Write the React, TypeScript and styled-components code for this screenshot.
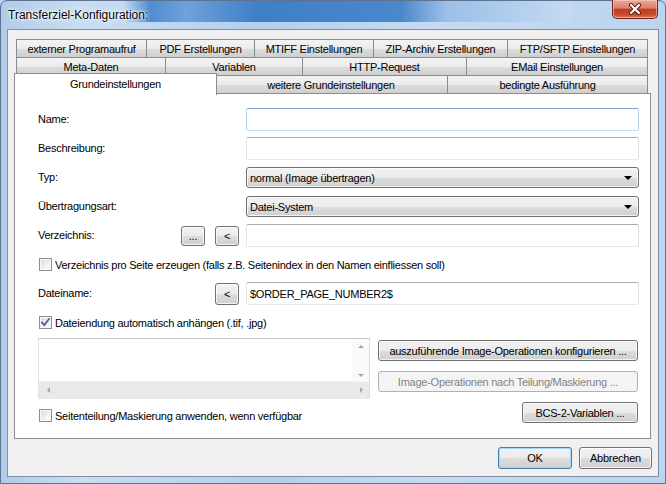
import React from 'react';
import styled, { createGlobalStyle, css } from 'styled-components';

const GlobalStyle = createGlobalStyle`
  html, body {
    margin: 0;
    padding: 0;
    width: 666px;
    height: 484px;
    overflow: hidden;
    background: #bcd4ee;
  }
  * { box-sizing: border-box; }
  body {
    font-family: "Liberation Sans", Arial, sans-serif;
    font-size: 11px;
    letter-spacing: -0.25px;
    color: #000;
  }
`;

// aero frame
const Window = styled.div`
  width: 666px;
  height: 484px;
  display: flex;
  flex-direction: column;
  padding: 0 6px 6px 6px;
  border: 1px solid #5d7390;
  border-radius: 7px 7px 0 0;
  background: linear-gradient(90deg, #b0cbe9 0%, #c9ddf2 12%, #b4cfec 40%, #c6dbf2 65%, #bcd4ee 100%);
`;

const TitleBar = styled.div`
  height: 28px;
  display: flex;
  align-items: flex-start;
`;

const Title = styled.div`
  position: relative;
  z-index: 1;
  flex: none;
  margin: 7px 0 0 1px;
  font-size: 12px;
  line-height: 15px;
  letter-spacing: 0;
  color: #000;
  text-shadow: 0 0 6px #fff, 0 0 3px #fff, 0 0 2px #fff;
`;

// blurred desktop showing through the glass
const Glass = styled.div`
  flex: 1;
  height: 21px;
  margin: 0 40px 0 -25px;
  background-color: #5b93d3;
  background-image: linear-gradient(90deg, #c6dbf1 0%, #4f8dd0 6%, #6ea2da 14%, #3f7fc6 30%, #4a88cc 62%, #9cc0e8 72%, #b2cfee 88%, #c6dbf1 100%);
`;

const CloseButton = styled.div`
  width: 46px;
  height: 19px;
  flex: none;
  margin: -1px 1px 0 0;
  display: flex;
  align-items: center;
  justify-content: center;
  border: 1px solid #6b2a21;
  border-top: none;
  border-radius: 0 0 5px 5px;
  background: linear-gradient(#e9a99a 0%, #dc7e68 45%, #c53d1f 52%, #c9472a 80%, #e27a55 100%);
  box-shadow: inset 0 0 0 1px rgba(255, 210, 200, 0.55);
`;

const Client = styled.div`
  flex: 1;
  display: flex;
  flex-direction: column;
  background: #f0f0f0;
  border: 1px solid #7f8fa4;
`;

const TabControl = styled.div`
  flex: 1;
  display: flex;
  flex-direction: column;
  margin: 9px 7px 0 6px;
`;

const TabRow = styled.div`
  display: flex;
  align-items: flex-start;
  padding: 0 3px 0 2px;
  & + & { margin-top: -1px; }
`;

const Tab = styled.div<{ $w: number; $active?: boolean }>`
  width: ${p => p.$w}px;
  height: 19px;
  flex: none;
  display: flex;
  align-items: center;
  justify-content: center;
  white-space: nowrap;
  border: 1px solid #898c95;
  background: linear-gradient(#f3f3f3 0%, #ebebeb 50%, #dddddd 51%, #cfcfcf 100%);
  & + & { margin-left: -1px; }
  ${p => p.$active && css`
    position: relative;
    z-index: 1;
    width: ${p.$w + 4}px;
    height: 22px;
    margin: -2px -2px -1px -2px;
    padding-bottom: 2px;
    border-bottom: none;
    background: #fff;
  `}
`;

const Panel = styled.div`
  flex: 1;
  margin-top: -1px;
  background: #fff;
  border: 1px solid #898c95;
  padding: 11px 11px 0 23px;
  display: flex;
  flex-direction: column;
`;

const FormRow = styled.div`
  height: 29px;
  display: flex;
  align-items: center;
`;

const Label = styled.div`
  flex: 1;
  white-space: nowrap;
  margin-top: -2px;
`;

const ButtonGroup = styled.div`
  display: flex;
  gap: 10px;
  margin-right: 7px;
`;

const TextBox = styled.div<{ $focus?: boolean }>`
  width: 393px;
  height: 23px;
  display: flex;
  align-items: center;
  padding-left: 3px;
  border: 1px solid;
  border-radius: 2px;
  border-color: ${p => (p.$focus ? '#7ea4cf #b7d2ec #c5dbf0 #b7d2ec' : '#abadb3 #dbdfe6 #e3e9ef #e2e3ea')};
  background: #fff;
  white-space: nowrap;
`;

const buttonFace = css`
  border: 1px solid #707070;
  border-radius: 3px;
  background: linear-gradient(#f2f2f2 0%, #ebebeb 50%, #dddddd 51%, #cfcfcf 100%);
  box-shadow: inset 0 0 0 1px rgba(255, 255, 255, 0.75);
`;

const Combo = styled.div`
  ${buttonFace};
  width: 393px;
  height: 21px;
  display: flex;
  align-items: center;
  justify-content: space-between;
  padding: 0 6px 0 3px;
`;

const Button = styled.div<{ $w?: number; $h?: number; $disabled?: boolean; $default?: boolean }>`
  ${buttonFace};
  width: ${p => (p.$w ? `${p.$w}px` : '100%')};
  height: ${p => p.$h ?? 21}px;
  flex: none;
  display: flex;
  align-items: center;
  justify-content: center;
  white-space: nowrap;
  ${p => p.$disabled && css`
    border-color: #adb2b5;
    background: #f4f4f4;
    color: #838383;
    box-shadow: none;
  `}
  ${p => p.$default && css`
    border-color: #3c7fb1;
    box-shadow: inset 0 0 0 1px #a8d8f3;
  `}
`;

const CheckRow = styled.div<{ $gapTop?: number }>`
  height: 29px;
  margin-top: ${p => p.$gapTop ?? 0}px;
  display: flex;
  align-items: center;
  gap: 3px;
  padding-left: 1px;
  white-space: nowrap;
`;

const CheckBox = styled.span`
  width: 13px;
  height: 13px;
  flex: none;
  display: flex;
  align-items: center;
  justify-content: center;
  border: 1px solid #8e8f8f;
  background: linear-gradient(135deg, #d6d6d6 0%, #f2f2f2 60%, #ffffff 100%);
  box-shadow: inset 0 0 0 1px #f6f6f6;
`;

const Section = styled.div`
  display: grid;
  grid-template-columns: 332px 260px;
  column-gap: 8px;
  margin-top: 1px;
`;

const LeftColumn = styled.div`
  display: flex;
  flex-direction: column;
`;

const RightColumn = styled.div`
  display: flex;
  flex-direction: column;
  align-items: flex-end;
  gap: 10px;
  padding-top: 2px;
`;

const ListBox = styled.div`
  height: 61px;
  display: grid;
  grid-template-columns: 1fr 17px;
  grid-template-rows: 1fr 17px;
  border: 1px solid;
  border-color: #c3c5ca #dbdfe6 #e3e9ef #e2e3ea;
  background: #fff;
`;

const VScroll = styled.div`
  display: flex;
  flex-direction: column;
  justify-content: space-between;
  align-items: center;
  padding: 6px 0 4px;
  background: #fafafa;
`;

const HScroll = styled.div`
  grid-column: 1 / 3;
  display: flex;
  justify-content: space-between;
  align-items: center;
  padding: 0 6px 0 8px;
  background: #e9e9e9;
  border-top: 1px solid #f4f4f4;
`;

const Arrow = styled.span<{ $dir: 'up' | 'down' | 'left' | 'right'; $color?: string; $size?: number }>`
  width: 0;
  height: 0;
  border: ${p => p.$size ?? 3}px solid transparent;
  ${p => {
    const c = p.$color ?? '#a6a6a6';
    const s = p.$size ?? 3;
    switch (p.$dir) {
      case 'up': return css`border-bottom-color: ${c}; border-top-width: 0; border-bottom-width: ${s}px;`;
      case 'down': return css`border-top-color: ${c}; border-bottom-width: 0; border-top-width: ${s}px;`;
      case 'left': return css`border-right-color: ${c}; border-left-width: 0;`;
      default: return css`border-left-color: ${c}; border-right-width: 0;`;
    }
  }}
`;

const Footer = styled.div`
  display: flex;
  justify-content: flex-end;
  gap: 7px;
  padding: 8px 6px 7px;
`;

const tabRows = [
  [
    { label: 'externer Programaufruf', w: 131 },
    { label: 'PDF Erstellungen', w: 109 },
    { label: 'MTIFF Einstellungen', w: 120 },
    { label: 'ZIP-Archiv Erstellungen', w: 135 },
    { label: 'FTP/SFTP Einstellungen', w: 141 },
  ],
  [
    { label: 'Meta-Daten', w: 150 },
    { label: 'Variablen', w: 138 },
    { label: 'HTTP-Request', w: 165 },
    { label: 'EMail Einstellungen', w: 182 },
  ],
  [
    { label: 'Grundeinstellungen', w: 199, active: true },
    { label: 'weitere Grundeinstellungen', w: 234 },
    { label: 'bedingte Ausführung', w: 201 },
  ],
];

const Check = ({ checked }: { checked?: boolean }) => (
  <CheckBox>
    {checked && (
      <svg width="11" height="11" viewBox="0 0 11 11">
        <path d="M2 5.5 L4.3 8 L9 2" fill="none" stroke="#4a6391" strokeWidth="1.8" strokeLinecap="square" />
      </svg>
    )}
  </CheckBox>
);

export default function App() {
  return (
    <>
      <GlobalStyle />
      <Window>
        <TitleBar>
          <Title>Transferziel-Konfiguration:</Title>
          <Glass />
          <CloseButton>
            <svg width="14" height="12" viewBox="0 0 14 12">
              <path d="M3 2 L11 10 M11 2 L3 10" stroke="#5b1a10" strokeWidth="4" strokeLinecap="round" />
              <path d="M3 2 L11 10 M11 2 L3 10" stroke="#fff" strokeWidth="2.2" strokeLinecap="round" />
            </svg>
          </CloseButton>
        </TitleBar>
        <Client>
          <TabControl>
            {tabRows.map((row, i) => (
              <TabRow key={i}>
                {row.map(t => (
                  <Tab key={t.label} $w={t.w} $active={'active' in t && t.active}>
                    {t.label}
                  </Tab>
                ))}
              </TabRow>
            ))}
            <Panel>
              <FormRow>
                <Label>Name:</Label>
                <TextBox $focus />
              </FormRow>
              <FormRow>
                <Label>Beschreibung:</Label>
                <TextBox />
              </FormRow>
              <FormRow>
                <Label>Typ:</Label>
                <Combo>
                  normal (Image übertragen)
                  <Arrow $dir="down" $color="#000" $size={4} />
                </Combo>
              </FormRow>
              <FormRow>
                <Label>Übertragungsart:</Label>
                <Combo>
                  Datei-System
                  <Arrow $dir="down" $color="#000" $size={4} />
                </Combo>
              </FormRow>
              <FormRow>
                <Label>Verzeichnis:</Label>
                <ButtonGroup>
                  <Button $w={24} $h={20}>...</Button>
                  <Button $w={24} $h={20}>&lt;</Button>
                </ButtonGroup>
                <TextBox />
              </FormRow>
              <CheckRow>
                <Check />
                Verzeichnis pro Seite erzeugen (falls z.B. Seitenindex in den Namen einfliessen soll)
              </CheckRow>
              <FormRow>
                <Label>Dateiname:</Label>
                <ButtonGroup>
                  <Button $w={24} $h={22}>&lt;</Button>
                </ButtonGroup>
                <TextBox>$ORDER_PAGE_NUMBER2$</TextBox>
              </FormRow>
              <CheckRow>
                <Check checked />
                Dateiendung automatisch anhängen (.tif, .jpg)
              </CheckRow>
              <Section>
                <LeftColumn>
                  <ListBox>
                    <div />
                    <VScroll>
                      <Arrow $dir="up" />
                      <Arrow $dir="down" />
                    </VScroll>
                    <HScroll>
                      <Arrow $dir="left" />
                      <Arrow $dir="right" />
                    </HScroll>
                  </ListBox>
                  <CheckRow $gapTop={2}>
                    <Check />
                    Seitenteilung/Maskierung anwenden, wenn verfügbar
                  </CheckRow>
                </LeftColumn>
                <RightColumn>
                  <Button>auszuführende Image-Operationen konfigurieren ...</Button>
                  <Button $disabled>Image-Operationen nach Teilung/Maskierung ...</Button>
                  <Button $w={116}>BCS-2-Variablen ...</Button>
                </RightColumn>
              </Section>
            </Panel>
          </TabControl>
          <Footer>
            <Button $w={74} $h={22} $default>OK</Button>
            <Button $w={73} $h={22}>Abbrechen</Button>
          </Footer>
        </Client>
      </Window>
    </>
  );
}
